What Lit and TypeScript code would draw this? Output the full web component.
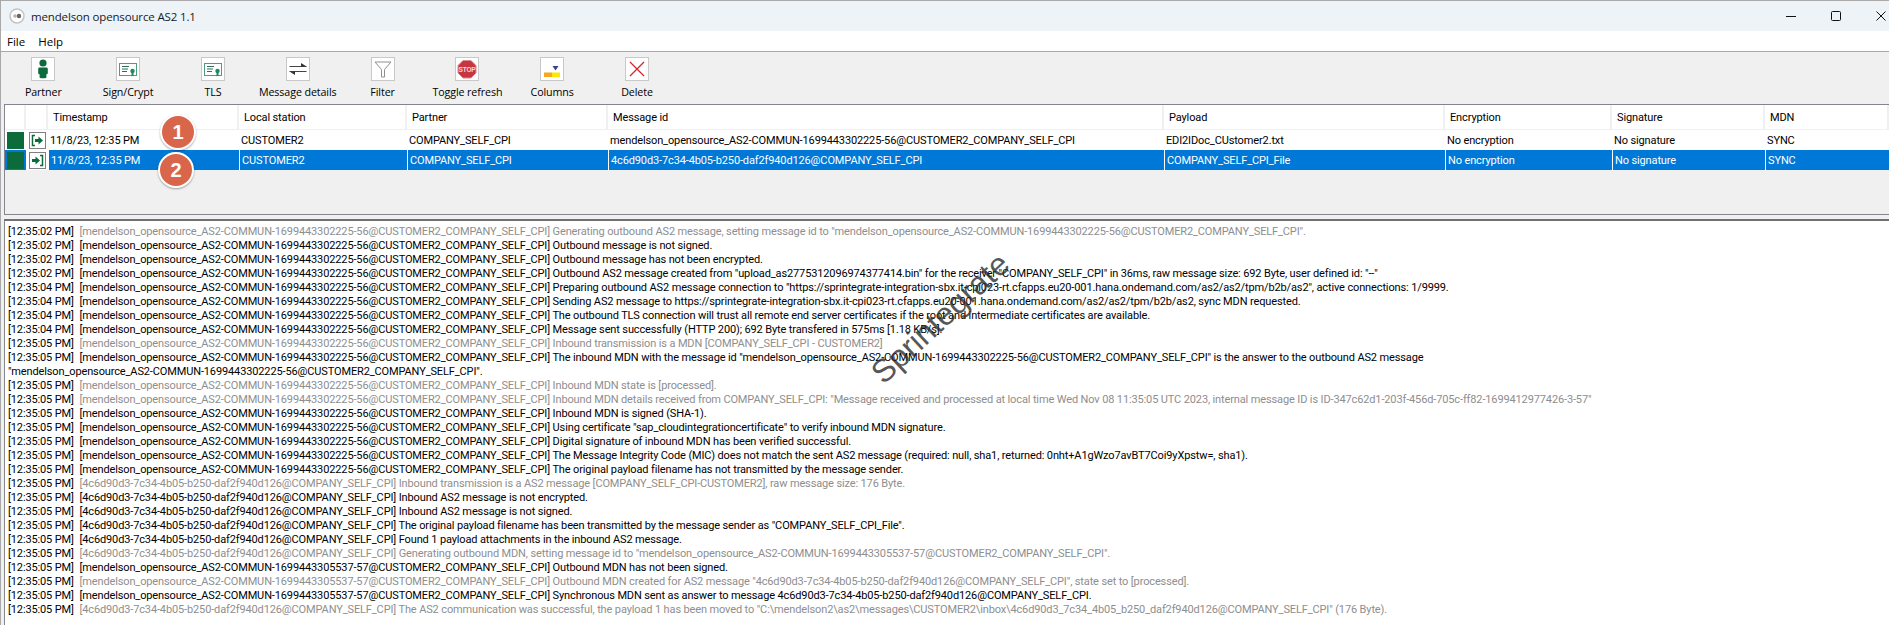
import { LitElement, html, css, svg } from 'lit';
import { customElement } from 'lit/decorators.js';

const M56 = '[mendelson_opensource_AS2-COMMUN-1699443302225-56@CUSTOMER2_COMPANY_SELF_CPI]';
const M57 = '[mendelson_opensource_AS2-COMMUN-1699443305537-57@CUSTOMER2_COMPANY_SELF_CPI]';
const ID = '[4c6d90d3-7c34-4b05-b250-daf2f940d126@COMPANY_SELF_CPI]';
const MID = 'mendelson_opensource_AS2-COMMUN-1699443302225-56@CUSTOMER2_COMPANY_SELF_CPI';
const URL = 'https://sprintegrate-integration-sbx.it-cpi023-rt.cfapps.eu20-001.hana.ondemand.com/as2/as2/tpm/b2b/as2';

// time, message reference, text, grey
type LogLine = [string, string, string, boolean?];

const LOG: LogLine[] = [
  ['12:35:02', M56, `Generating outbound AS2 message, setting message id to "${MID}".`, true],
  ['12:35:02', M56, 'Outbound message is not signed.'],
  ['12:35:02', M56, 'Outbound message has not been encrypted.'],
  ['12:35:02', M56, 'Outbound AS2 message created from "upload_as2775312096974377414.bin" for the receiver "COMPANY_SELF_CPI" in 36ms, raw message size: 692 Byte, user defined id: "--"'],
  ['12:35:04', M56, `Preparing outbound AS2 message connection to "${URL}", active connections: 1/9999.`],
  ['12:35:04', M56, `Sending AS2 message to ${URL}, sync MDN requested.`],
  ['12:35:04', M56, 'The outbound TLS connection will trust all remote end server certificates if the root and intermediate certificates are available.'],
  ['12:35:04', M56, 'Message sent successfully (HTTP 200); 692 Byte transfered in 575ms [1.18 KB/s].'],
  ['12:35:05', M56, 'Inbound transmission is a MDN [COMPANY_SELF_CPI - CUSTOMER2]', true],
  ['12:35:05', M56, `The inbound MDN with the message id "${MID}" is the answer to the outbound AS2 message`],
  ['', '', `"${MID}".`],
  ['12:35:05', M56, 'Inbound MDN state is [processed].', true],
  ['12:35:05', M56, 'Inbound MDN details received from COMPANY_SELF_CPI: "Message received and processed at local time Wed Nov 08 11:35:05 UTC 2023, internal message ID is ID-347c62d1-203f-456d-705c-ff82-1699412977426-3-57"', true],
  ['12:35:05', M56, 'Inbound MDN is signed (SHA-1).'],
  ['12:35:05', M56, 'Using certificate "sap_cloudintegrationcertificate" to verify inbound MDN signature.'],
  ['12:35:05', M56, 'Digital signature of inbound MDN has been verified successful.'],
  ['12:35:05', M56, 'The Message Integrity Code (MIC) does not match the sent AS2 message (required: null, sha1, returned: 0nht+A1gWzo7avBT7Coi9yXpstw=, sha1).'],
  ['12:35:05', M56, 'The original payload filename has not transmitted by the message sender.'],
  ['12:35:05', ID, 'Inbound transmission is a AS2 message [COMPANY_SELF_CPI-CUSTOMER2], raw message size: 176 Byte.', true],
  ['12:35:05', ID, 'Inbound AS2 message is not encrypted.'],
  ['12:35:05', ID, 'Inbound AS2 message is not signed.'],
  ['12:35:05', ID, 'The original payload filename has been transmitted by the message sender as "COMPANY_SELF_CPI_File".'],
  ['12:35:05', ID, 'Found 1 payload attachments in the inbound AS2 message.'],
  ['12:35:05', ID, 'Generating outbound MDN, setting message id to "mendelson_opensource_AS2-COMMUN-1699443305537-57@CUSTOMER2_COMPANY_SELF_CPI".', true],
  ['12:35:05', M57, 'Outbound MDN has not been signed.'],
  ['12:35:05', M57, 'Outbound MDN created for AS2 message "4c6d90d3-7c34-4b05-b250-daf2f940d126@COMPANY_SELF_CPI", state set to [processed].', true],
  ['12:35:05', M57, 'Synchronous MDN sent as answer to message 4c6d90d3-7c34-4b05-b250-daf2f940d126@COMPANY_SELF_CPI.'],
  ['12:35:05', ID, 'The AS2 communication was successful, the payload 1 has been moved to "C:\\mendelson2\\as2\\messages\\CUSTOMER2\\inbox\\4c6d90d3_7c34_4b05_b250_daf2f940d126@COMPANY_SELF_CPI" (176 Byte).', true],
];

const ROWS = [
  ['11/8/23, 12:35 PM', 'CUSTOMER2', 'COMPANY_SELF_CPI', 'mendelson_opensource_AS2-COMMUN-1699443302225-56@CUSTOMER2_COMPANY_SELF_CPI', 'EDI2IDoc_CUstomer2.txt', 'No encryption', 'No signature', 'SYNC'],
  ['11/8/23, 12:35 PM', 'CUSTOMER2', 'COMPANY_SELF_CPI', '4c6d90d3-7c34-4b05-b250-daf2f940d126@COMPANY_SELF_CPI', 'COMPANY_SELF_CPI_File', 'No encryption', 'No signature', 'SYNC'],
];

const HEADERS = ['Timestamp', 'Local station', 'Partner', 'Message id', 'Payload', 'Encryption', 'Signature', 'MDN'];

const cert = svg`
  <rect x="3.5" y="6.5" width="17" height="12" fill="#fff" stroke="#4f9c80"/>
  <path d="M6 9.5h7M6 12h6M6 14.5h5" stroke="#2f6f59"/>
  <circle cx="16.5" cy="14" r="2.2" fill="#1c8a5c"/>
  <path d="M15.5 16v3.5l1-1 1 1V16" fill="#1c8a5c"/>`;

const TOOLS = [
  ['Partner', svg`
    <circle cx="12" cy="6" r="3.6" fill="#0c6a3c"/>
    <path d="M8.6 10.5h6.8c.9 0 1.4.7 1.4 1.5v4c0 .8-.6 1.3-1.4 1.3V20c0 .8-.5 1.2-1.2 1.2H9.8c-.7 0-1.2-.4-1.2-1.2v-2.7c-.8 0-1.4-.5-1.4-1.3v-4c0-.8.5-1.5 1.4-1.5z" fill="#0c6a3c"/>`],
  ['Sign/Crypt', cert],
  ['TLS', cert],
  ['Message details', svg`
    <path d="M3.5 9.5h17M3.5 14.5h17" stroke="#444" fill="none"/>
    <path d="M15 6l5.5 3.5H15zM9 18l-5.5-3.5H9z" fill="#333"/>`],
  ['Filter', svg`
    <path d="M4 5h16l-6.5 7.5V20h-3v-7.500z" fill="#fff" stroke="#8f8f8f"/>`],
  ['Toggle refresh', svg`
    <path d="M8 3.500h8l5 5v7.500l-5 5H8l-5-5V8.500z" fill="#c8343f" stroke="#d98a90"/>
    <text x="12" y="14.500" text-anchor="middle" font-size="6.500" font-weight="700" fill="#f5d9da" font-family="Liberation Sans, sans-serif">STOP</text>`],
  ['Columns', svg`
    <path d="M12.500 9h6l-3 4.500z" fill="#3b3f8f"/>
    <rect x="4" y="15.500" width="8" height="4.500" fill="#f5a623"/>
    <rect x="12" y="15.500" width="8" height="4.500" fill="#ffe800"/>`],
  ['Delete', svg`
    <path d="M5 5l14 14M19 5L5 19" stroke="#d8232a" stroke-width="1.300" fill="none"/>`],
];

@customElement('app-root')
export class AppRoot extends LitElement {
  static styles = css`
    :host {
      display: block;
      position: relative;
      width: 1889px;
      height: 625px;
      overflow: hidden;
      background: #f0f0f0;
      color: #000;
      font-family: Roboto, 'Liberation Sans', sans-serif;
      font-size: 11px;
      letter-spacing: -0.13px;
    }
    .window {
      display: flex;
      flex-direction: column;
      height: 100%;
      box-sizing: border-box;
      border-top: 1px solid #a9a9a9;
      border-left: 1px solid #a9a9a9;
    }
    .title {
      display: flex;
      align-items: center;
      height: 30px;
      flex: none;
      background: #eef3f8;
      padding-left: 8px;
      font-family: 'Open Sans', sans-serif;
      font-size: 11.5px;
      letter-spacing: -0.15px;
      color: #1a1a1a;
    }
    .app-icon { margin-right: 6px; }
    .controls {
      display: flex;
      margin-left: auto;
      margin-right: 2px;
    }
    .controls svg { width: 12px; height: 12px; margin-left: 33px; }
    .menu {
      display: flex;
      gap: 13px;
      align-items: center;
      height: 20px;
      flex: none;
      background: #fff;
      padding-left: 6px;
      border-bottom: 1px solid #a9a9a9;
      font-family: 'Open Sans', sans-serif;
      font-size: 11.5px;
      letter-spacing: 0;
    }
    .toolbar {
      display: flex;
      height: 52px;
      flex: none;
      background: #f0f0f0;
    }
    .tool {
      width: 85px;
      margin-left: -0.2px;
      display: flex;
      flex-direction: column;
      align-items: center;
      padding-top: 5px;
      box-sizing: border-box;
      font-family: 'Open Sans', sans-serif;
      font-size: 10.7px;
      letter-spacing: -0.1px;
    }
    .tool-icon {
      width: 24px;
      height: 24px;
      box-sizing: border-box;
      background: #fff;
      border: 1px solid #c8c8c8;
      margin-bottom: 4px;
    }
    .tool-icon svg { display: block; margin: -1px; width: 24px; height: 24px; }
    .table {
      flex: none;
      height: 111px;
      margin-left: 3px;
      box-sizing: border-box;
      border: 1px solid #85858f;
      border-right: none;
      background: #f0f0f0;
    }
    .row {
      display: grid;
      grid-template-columns: 21px 22px 191px 168px 201px 556px 281px 167px 153px 1fr;
      height: 20px;
      align-items: stretch;
      background: #fff;
    }
    .head { height: 25px; border-bottom: 1px solid #f0f0f0; box-sizing: border-box; }
    .hcell {
      display: flex;
      align-items: center;
      padding-left: 5px;
      border-right: 2px solid #f0f0f0;
      white-space: nowrap;
    }
    .cell {
      display: flex;
      align-items: center;
      padding-left: 2px;
      white-space: nowrap;
      overflow: hidden;
    }
    .selected .cell {
      background: #0078d7;
      color: #fff;
      border-left: 1px solid #fff;
    }
    .state {
      display: flex;
      align-items: center;
      justify-content: center;
    }
    .selected .state:first-child { background: #0078d7; }
    .square { width: 17px; height: 17px; background: #0b6b3a; }
    .dir {
      width: 17px;
      height: 17px;
      box-sizing: border-box;
      background: #fff;
      border: 1px solid #808080;
    }
    .dir svg { display: block; width: 15px; height: 15px; }
    .split { height: 4px; flex: none; background: #f0f0f0; }
    .log {
      flex: 1;
      margin-left: 3px;
      background: #fff;
      border-top: 2px solid #6f6f76;
      border-left: 1px solid #85858f;
      padding: 4px 0 0 3px;
      box-sizing: border-box;
      overflow: hidden;
    }
    .line {
      height: 14px;
      line-height: 14px;
      white-space: pre;
      color: #000;
    }
    .msg.timed { margin-left: 3px; }
    .grey { color: #8e8e8e; }
    .badge {
      position: absolute;
      width: 32px;
      height: 32px;
      border-radius: 50%;
      background: #d9664a;
      border: 2px solid #fff;
      box-shadow: 0 1px 2px rgba(0, 0, 0, 0.35);
      color: #fff;
      font-family: 'Liberation Sans', sans-serif;
      font-weight: 700;
      font-size: 20px;
      letter-spacing: 0;
      display: flex;
      align-items: center;
      justify-content: center;
    }
    .one { left: 160px; top: 114px; }
    .two { left: 158px; top: 152px; }
    .mark {
      position: absolute;
      left: 840px;
      top: 298px;
      width: 200px;
      text-align: center;
      transform: rotate(-42.700deg);
      font-family: 'Liberation Sans', sans-serif;
      font-size: 32px;
      letter-spacing: 0;
      line-height: 40px;
      color: rgba(40, 40, 40, 0.78);
      pointer-events: none;
    }
  `;

  render() {
    return html`
      <div class="window">
        <div class="title">
          <svg class="app-icon" width="16" height="16" viewBox="0 0 16 16">
            <circle cx="8" cy="8" r="7" fill="#fff" stroke="#c4c4c4" stroke-width="1.500"/>
            <circle cx="6" cy="8" r="1.800" fill="#b5b5b5"/>
            <circle cx="10" cy="8" r="2.200" fill="#666"/>
          </svg>
          mendelson opensource AS2 1.1
          <div class="controls">
            <svg viewBox="0 0 12 12"><path d="M1 6.500h10" stroke="#111" fill="none"/></svg>
            <svg viewBox="0 0 12 12"><rect x="1.500" y="1.500" width="9" height="9" rx="1" stroke="#111" fill="none"/></svg>
            <svg viewBox="0 0 12 12"><path d="M1.500 1.500l9 9M10.500 1.500l-9 9" stroke="#111" fill="none"/></svg>
          </div>
        </div>
        <div class="menu"><span>File</span><span>Help</span></div>
        <div class="toolbar">
          ${TOOLS.map(([label, icon]) => html`
            <div class="tool">
              <div class="tool-icon"><svg viewBox="0 0 24 24">${icon}</svg></div>
              <span>${label}</span>
            </div>`)}
        </div>
        <div class="table">
          <div class="row head">
            <div class="hcell"></div>
            <div class="hcell"></div>
            ${HEADERS.map((h) => html`<div class="hcell">${h}</div>`)}
          </div>
          ${ROWS.map((r, i) => html`
            <div class="row ${i === 1 ? 'selected' : ''}">
              <div class="state"><div class="square"></div></div>
              <div class="state">
                <div class="dir">
                  <svg viewBox="0 0 15 15">
                    ${i === 0
                      ? svg`<path d="M5 2.500H2.500v10H5" stroke="#0b6b3a" stroke-width="1.500" fill="none"/><path d="M5 6h3.500V3.500L13 7.500l-4.500 4V9H5z" fill="#0b6b3a"/>`
                      : svg`<path d="M10 2.500h2.500v10H10" stroke="#0b6b3a" stroke-width="1.500" fill="none"/><path d="M2 6h3.500V3.500L10 7.500l-4.500 4V9H2z" fill="#0b6b3a"/>`}
                  </svg>
                </div>
              </div>
              ${r.map((c) => html`<div class="cell">${c}</div>`)}
            </div>`)}
        </div>
        <div class="split"></div>
        <div class="log">
          ${LOG.map(([t, ref, text, grey]) => html`
            <div class="line">${t ? `[${t} PM] ` : ''}<span class="msg ${t ? 'timed' : ''} ${grey ? 'grey' : ''}">${ref ? `${ref} ` : ''}${text}</span></div>`)}
        </div>
      </div>
      <div class="badge one">1</div>
      <div class="badge two">2</div>
      <div class="mark">Sprintegrate</div>
    `;
  }
}
